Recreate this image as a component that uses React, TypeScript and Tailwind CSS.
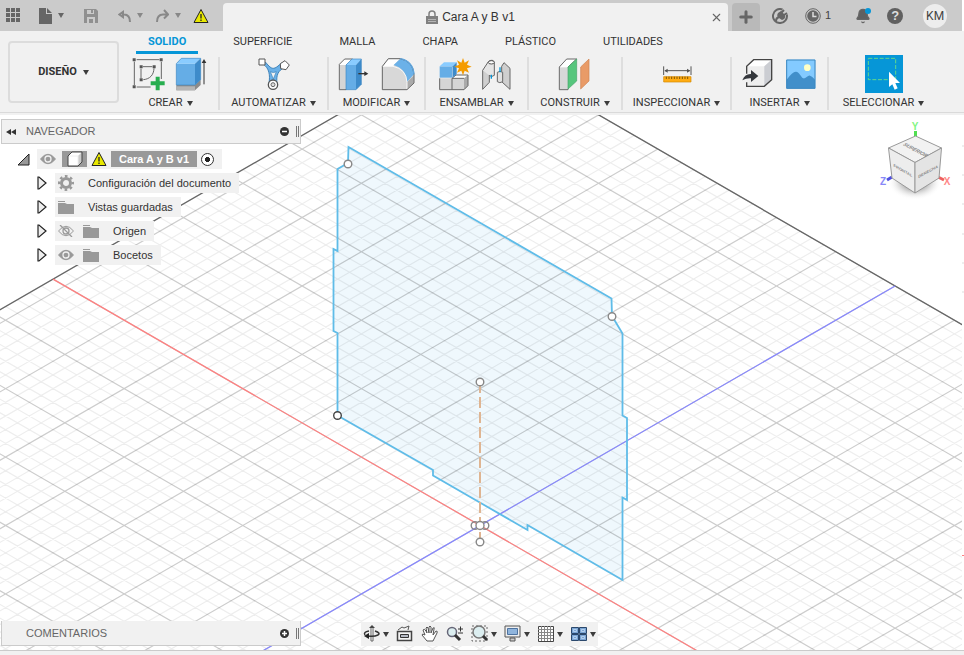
import React, { useState } from 'react';
import { X, Plus, Bell } from 'lucide-react';

const TABS = ['SOLIDO', 'SUPERFICIE', 'MALLA', 'CHAPA', 'PLÁSTICO', 'UTILIDADES'];

const Caret = ({ className = 'text-[#3c3c3c]' }: { className?: string }) => (
  <svg width="6" height="5" viewBox="0 0 6 5" className={`shrink-0 ${className}`} fill="currentColor">
    <path d="M0 0h6L3 5z" />
  </svg>
);

const Warning = () => (
  <svg width="16" height="16" viewBox="0 0 16 16">
    <path d="M8 1.5 15 14.5H1z" fill="#e8e800" stroke="#222" strokeLinejoin="round" />
    <path d="M8 6v4.500M8 11.500v1.500" stroke="#222" strokeWidth="1.300" />
  </svg>
);

/* ---------- ribbon icons, drawn on a 102 unit board ---------- */

const Board = ({ children }: { children: React.ReactNode }) => (
  <svg width="34" height="34" viewBox="0 0 102 102" fill="none">{children}</svg>
);

const SketchIcon = () => (
  <Board>
    <g stroke="#666" strokeWidth="3">
      <path d="M14 8h68M7 14v70M88 14v52M14 90h42M33 29h28M27 35v28M66 34c-1 20-12 32-32 34" />
    </g>
    <g fill="#555">
      <path d="M2 4h9v9H2zM83 4h9v9h-9zM2 85h9v9H2zM23 25h9v9h-9zM62 25h9v9h-9zM23 64h9v9h-9z" />
    </g>
    <path d="M71 59h12v14h15v12H83v15H71V85H56V73h15z" fill="#27ae4f" />
  </Board>
);

const ExtrudeIcon = () => (
  <Board>
    <path d="M4 84h56l17-16v16l-17 16H4z" fill="#8b8b8b" />
    <path d="M4 88h56v12H4z" fill="#b5b5b5" />
    <path d="M4 20h56v64H4z" fill="#65ade6" />
    <path d="M4 20 19 4h58L60 20z" fill="#8accff" />
    <path d="M60 20 77 4v64L60 84z" fill="#3e8bca" />
    <path d="M4 84V20L19 4h58v64L60 84z" stroke="#3c88c4" strokeWidth="2" />
    <path d="M87 82V14" stroke="#333" strokeWidth="3" />
    <path d="m80 18 7-12 7 12z" fill="#333" />
  </Board>
);

const AutomateIcon = () => (
  <Board>
    <path d="M20 22c16 12 20 32 16 56h24c-3-22 3-38 22-46l-8-14C62 28 56 34 49 34S36 28 26 16z" fill="#6bb1e8" stroke="#3e83ba" strokeWidth="3" />
    <path d="M40 44q9 5 18 0l-9 22z" fill="#f2f2f2" stroke="#3e83ba" strokeWidth="2" />
    <path d="M6 6h18v18H6zM84 11l13 13-10 14-16-3-1-15z" fill="#fff" stroke="#555" strokeWidth="3" />
    <circle cx="48" cy="83" r="14" fill="#fff" stroke="#555" strokeWidth="4" />
    <circle cx="48" cy="83" r="6" fill="#ddd" stroke="#666" strokeWidth="3" />
  </Board>
);

const PressPullIcon = () => (
  <Board>
    <path d="M4 22 20 6h24L24 26v72H4z" fill="#fff" stroke="#666" strokeWidth="3" />
    <path d="M6 24h18v72H6z" fill="#d5d5d5" />
    <path d="M24 24h30v74H24z" fill="#65ade6" />
    <path d="M24 24 42 6h28L54 24z" fill="#8accff" />
    <path d="M54 24 70 6v76L54 98z" fill="#3e8bca" />
    <path d="M24 98V24L42 6h28v76L54 98z" stroke="#3c88c4" strokeWidth="2" />
    <path d="M61 50h20" stroke="#333" strokeWidth="4" />
    <path d="m79 43 12 7-12 7z" fill="#333" />
  </Board>
);

const FilletIcon = () => (
  <Board>
    <path d="M4 28 22 5h36q38 8 41 47v26L78 98H4z" fill="#d8d8d8" />
    <path d="M6 28 23 7h32L36 28z" fill="#fff" />
    <path d="M78 76 98 56v22L78 97z" fill="#aaa" />
    <path d="M38 24 58 5q38 8 41 47L78 74Q76 36 38 24" fill="#6bb1e8" />
    <path d="M4 28h32q40 8 42 48v22" stroke="#f8f8f8" strokeWidth="3" />
    <path d="M4 28 22 5h36q38 8 41 47v26L78 98H4z" stroke="#666" strokeWidth="3" />
    <path d="M58 5q38 8 41 47" stroke="#5ea5de" strokeWidth="4" />
  </Board>
);

const NewComponentIcon = () => (
  <Board>
    <path d="M5 64h74V98H5z" fill="#d5d5d5" />
    <path d="m42 64 12-10h36L78 64z" fill="#fff" />
    <path d="m78 64 12-10v32L78 98z" fill="#aaa" />
    <path d="M5 64v34h73l12-12V54H54L42 64v34M42 64h36" stroke="#666" strokeWidth="3" />
    <path d="M5 28h38v34H5z" fill="#65ade6" />
    <path d="m5 28 13-12h38L44 28z" fill="#8accff" />
    <path d="m44 28 12-12v35L44 62z" fill="#3e8bca" />
    <path d="m75 3 5 14 13-7-6 13 14 6-14 5 6 13-13-6-5 14-5-14-13 6 6-13-14-5 14-6-6-13 13 7z" fill="#f59c00" />
  </Board>
);

const JointIcon = () => (
  <Board>
    <path d="M5 40 25 27V76L5 97z" fill="#cfcfcf" stroke="#666" strokeWidth="3" />
    <path d="M5 40 22 14q14-10 18 3v38q-8 7-16 0" fill="#e5e5e5" stroke="#666" strokeWidth="3" />
    <ellipse cx="31" cy="16" rx="9" ry="5" fill="#fff" stroke="#555" strokeWidth="3" />
    <path d="M62 28 69 17 87 34V97L62 74z" fill="#cfcfcf" stroke="#666" strokeWidth="3" />
    <path d="M49 46q8-6 16 0v28q-9 6-16 0z" fill="#e2e2e2" stroke="#666" strokeWidth="3" />
    <path d="M31 53v12M57 31v15" stroke="#0696d7" strokeWidth="4" />
  </Board>
);

const PlaneIcon = () => (
  <Board>
    <path d="M4 30 26 6h30L30 30v68H4z" fill="#fff" stroke="#666" strokeWidth="3" />
    <path d="M6 31h24v65H6z" fill="#d8d8d8" />
    <path d="M30 30 56 6v66L30 96z" fill="#56c67d" stroke="#47a569" strokeWidth="2" />
    <path d="M68 30 93 6v66L68 96z" fill="#e99b67" stroke="#cf8250" strokeWidth="2" />
  </Board>
);

const MeasureIcon = () => (
  <Board>
    <path d="M11 28v26M93 28v26M15 41h74" stroke="#555" strokeWidth="3" />
    <path d="m13 41 10-6v12zM91 41l-10-6v12z" fill="#555" />
    <path d="M11 59h82v16H11z" fill="#ffac13" stroke="#d28800" strokeWidth="2" />
    <path d="M19 59v7m8-7v7m8-7v7m8-7v7m8-7v7m8-7v7m8-7v7m8-7v7m8-7v7" stroke="#805600" strokeWidth="3" />
  </Board>
);

const InsertIcon = () => (
  <Board>
    <path d="M17 28 38 8h54v60L70 88H17z" fill="#eee" />
    <path d="M17 28 38 8h54L70 28z" fill="#fff" />
    <path d="M70 28 92 8v60L70 88z" fill="#cbcdd2" />
    <path d="M17 50V28L38 8h54v60L70 88H17V76" stroke="#444" strokeWidth="4" />
    <path d="M4 70q8-20 26-19V39l22 18-22 18V64q-14-1-26 6" fill="#34373c" />
  </Board>
);

const ImageIcon = () => (
  <Board>
    <path d="M7 8h87v87H7z" fill="#83caff" />
    <path d="M8 68q18-25 28-24c10 1 16 18 22 20s14-10 20-8 12 8 15 12v26H8z" fill="#418fca" />
    <circle cx="70" cy="32" r="10" fill="#ffffc5" />
    <path d="M8 9h85v85H8z" stroke="#3c87be" strokeWidth="3" />
  </Board>
);

const SelectIcon = () => (
  <svg width="38" height="38" viewBox="0 0 114 114" className="bg-[#0696d7]">
    <path d="M10 10h82v64H10z" fill="none" stroke="#62d88b" strokeWidth="3" strokeDasharray="12 5" />
    <path d="M72 50v46l10-8 7 16 9-4-7-16h14z" fill="#fff" />
  </svg>
);

const GROUPS = [
  { label: 'CREAR', width: 'w-[97px]', icons: [SketchIcon, ExtrudeIcon] },
  { label: 'AUTOMATIZAR', width: 'w-[109px]', icons: [AutomateIcon] },
  { label: 'MODIFICAR', width: 'w-[97px]', icons: [PressPullIcon, FilletIcon] },
  { label: 'ENSAMBLAR', width: 'w-[103px]', icons: [NewComponentIcon, JointIcon] },
  { label: 'CONSTRUIR', width: 'w-[94px]', icons: [PlaneIcon] },
  { label: 'INSPECCIONAR', width: 'w-[109px]', icons: [MeasureIcon] },
  { label: 'INSERTAR', width: 'w-[97px]', icons: [InsertIcon, ImageIcon] },
  { label: 'SELECCIONAR', width: 'w-[109px]', icons: [SelectIcon] },
];

/* ---------- title bar ---------- */

const TitleBar = () => (
  <header className="flex h-[31px] items-end border-r-2 border-white bg-[#cbcbcb] text-[#666]">
    <div className="flex h-full w-[223px] shrink-0 items-center pl-[6px]">
      <button aria-label="Panel de datos">
        <svg width="15" height="15" viewBox="0 0 15 15" fill="#666">
          <path d="M0 0h4v4H0zM5 0h4v4H5zM10 0h4v4h-4zM0 5h4v4H0zM5 5h4v4H5zM10 5h4v4h-4zM0 10h4v4H0zM5 10h4v4H5zM10 10h4v4h-4z" />
        </svg>
      </button>
      <button aria-label="Archivo" className="ml-[18px] flex items-center gap-[6px]">
        <svg width="13" height="16" viewBox="0 0 13 16" fill="#666"><path d="M0 0h7v6h6v10H0zM8 0l5 5H8z" /></svg>
        <Caret className="text-[#666]" />
      </button>
      <button aria-label="Guardar" className="ml-5">
        <svg width="14" height="14" viewBox="0 0 14 14">
          <path d="M0 0h12l2 2v12H0z" fill="#909090" />
          <path d="M3 1h7v4H3zM3 8h8v6H3z" fill="#cbcbcb" />
          <path d="M7 1h2v3H7zM5 10h4v4H5z" fill="#909090" />
        </svg>
      </button>
      <button aria-label="Deshacer" className="ml-5 flex items-center gap-[6px]">
        <svg width="13" height="14" viewBox="0 0 13 14" fill="none" stroke="#888" strokeWidth="2"><path d="M5 3v5L1.500 5.500zM4 5.500h2q6 0 6 7.500" /></svg>
        <Caret className="text-[#888]" />
      </button>
      <button aria-label="Rehacer" className="ml-[13px] flex items-center gap-[6px]">
        <svg width="13" height="14" viewBox="0 0 13 14" fill="none" stroke="#888" strokeWidth="2"><path d="m8 1 4 4.500-4 4M11 5.500H7Q1 5.500 1 13" /></svg>
        <Caret className="text-[#888]" />
      </button>
      <button aria-label="Advertencia" className="ml-3"><Warning /></button>
    </div>

    <div className="flex h-[28px] flex-1 items-center rounded-t bg-[#f1f1f1] pr-[5px]">
      <div className="flex flex-1 items-center justify-center gap-1 pl-2 text-xs text-[#333]">
        <svg width="12" height="14" viewBox="0 0 12 14" fill="none">
          <path d="M3 6V4q0-3 3-3t3 3v2" stroke="#808080" strokeWidth="1.500" />
          <path d="M0 6h12v8H0z" fill="#808080" />
          <path d="M2 9.500h8M2 11.500h8" stroke="#b5b5b5" />
        </svg>
        <span>Cara A y B v1</span>
      </div>
      <button aria-label="Cerrar"><X size={13} /></button>
    </div>
    <button aria-label="Nueva pestaña" className="ml-1 flex h-[28px] w-[28px] items-center justify-center rounded-t bg-[#b9b9b9]">
      <Plus size={18} strokeWidth={4} />
    </button>

    <div className="flex h-full w-[202px] shrink-0 items-center pl-3">
      <button aria-label="Extensiones">
        <svg width="16" height="16" viewBox="0 0 16 16" fill="none">
          <path d="M10.500 1.500A7 7 0 1 0 14.800 6.500" stroke="#666" strokeWidth="2" />
          <path d="M6 5 9 3l4 4q1 4-3 5L7 10Q4 8 6 5" fill="#666" />
          <path d="M7 9q-3 1-3 4M9 5l3-3M12 7l3-2" stroke="#666" strokeWidth="2" />
        </svg>
      </button>
      <button aria-label="Trabajos" className="ml-[17px] flex items-center gap-1 text-[11px] text-[#444]">
        <svg width="16" height="16" viewBox="0 0 16 16" fill="none">
          <circle cx="8" cy="8" r="7.300" stroke="#666" />
          <circle cx="8" cy="8" r="5.800" fill="#666" />
          <path d="M8 4v4.500h3.500" stroke="#ddd" strokeWidth="1.500" />
        </svg>
        1
      </button>
      <button aria-label="Notificaciones" className="relative ml-6">
        <Bell size={16} fill="#606060" />
        <span className="absolute top-0 right-0 h-[6px] w-[6px] rounded-full bg-[#0696d7]" />
      </button>
      <button aria-label="Ayuda" className="ml-4 flex h-4 w-4 items-center justify-center rounded-full bg-[#606060] text-[13px] font-bold text-[#ddd]">?</button>
      <button className="ml-5 flex h-6 w-6 items-center justify-center rounded-full bg-[#ededed] font-[Roboto] text-xs text-[#444]">KM</button>
    </div>
  </header>
);

/* ---------- ribbon ---------- */

const Ribbon = () => {
  const [active, setActive] = useState('SOLIDO');

  return (
    <div className="flex h-[84px] border-b-2 border-[#f1f1f1] bg-[#f1f1f1] font-[Roboto,sans-serif] text-[11px] text-[#333]">
      <div className="flex flex-1 border-b border-[#dadada]">
        <button className="mt-[10px] ml-2 flex h-[62px] w-[111px] shrink-0 items-center justify-center gap-[6px] rounded border-2 border-[#dcdcdc] font-bold">
          DISEÑO <Caret />
        </button>
        <div className="ml-1">
          <nav className="flex h-[23px] gap-[23px] pl-[13px]">
            {TABS.map((tab) => (
              <button
                key={tab}
                onClick={() => setActive(tab)}
                className={`border-b-[3px] px-3 pt-[3px] ${tab === active ? 'border-[#0696d7] font-bold text-[#0696d7]' : 'border-transparent'}`}
              >
                {tab}
              </button>
            ))}
          </nav>
          <div className="flex h-[56px] items-stretch pt-[3px]">
            {GROUPS.map(({ label, width, icons }, i) => (
              <div
                key={label}
                className={`flex flex-col justify-between ${width} ${i < GROUPS.length - 1 ? 'border-r-2 border-[#dedede]' : ''}`}
              >
                <div className="flex h-[34px] items-center justify-center gap-[9px]">
                  {icons.map((Icon, n) => <button key={n} aria-label={label.toLowerCase()}><Icon /></button>)}
                </div>
                <button className="flex items-center justify-center gap-1 leading-[14px]">
                  {label} <Caret />
                </button>
              </div>
            ))}
          </div>
        </div>
      </div>
    </div>
  );
};

/* ---------- model space ---------- */

// a runs along the red axis, b along the blue one, in major grid cells
const project = (a: number, b: number) => [480 + (a + b) * 59.3, 525.5 + (a - b) * 34.22];

const segment = (a1: number, b1: number, a2: number, b2: number) => {
  const [x1, y1] = project(a1, b1);
  const [x2, y2] = project(a2, b2);
  return `M${x1} ${y1}L${x2} ${y2}`;
};

const gridPath = (major: boolean) => {
  let d = '';
  for (let i = -36; i <= 36; i++) {
    if ((i % 5 === 0) !== major) continue;
    d += segment(i / 5, -7.2, i / 5, 7);
    if (i <= 35) d += segment(-7.2, i / 5, 7.2, i / 5);
  }
  return d;
};

const PROFILE =
  'M348.500 147 611.500 298.500 612 316 622.500 333.500V415.500L627 418V500L622.500 497.500V580L527.500 525V530L433 475.500V470L337.500 415.500V333L333.500 331V249L337.500 251V169L348 163Z';

const Canvas = () => (
  <svg
    className="absolute inset-0 h-full w-full"
    viewBox="0 115 964 535"
    preserveAspectRatio="xMidYMid slice"
    fill="none"
  >
    <defs>
      <radialGradient id="shade">
        <stop offset="0.400" stopColor="#888" stopOpacity="0.700" />
        <stop offset="1" stopColor="#fff" stopOpacity="0" />
      </radialGradient>
    </defs>
    <path d={PROFILE} fill="#eff8fd" />
    <path d={gridPath(false)} stroke="#000" strokeOpacity="0.070" strokeWidth="1.200" />
    <path d={gridPath(true)} stroke="#000" strokeOpacity="0.200" strokeWidth="1.200" />
    <path d={segment(-7.2, -7, -7.2, 7) + segment(-7.2, 7, 7.2, 7)} stroke="#666" strokeWidth="1.300" />
    <path d={segment(-7.2, 0, 7.2, 0)} stroke="#ff7f7f" strokeWidth="1.200" />
    <path d={segment(0, -7.2, 0, 7)} stroke="#8686ff" strokeWidth="1.200" />
    <path d={PROFILE} stroke="#5fbce8" strokeWidth="1.800" />
    <path d="M480 386V542" stroke="#dfb592" strokeWidth="2" strokeDasharray="11 4" strokeDashoffset="4" />
    <g stroke="#888" strokeWidth="1.400" fill="#fff">
      <circle cx="348" cy="164" r="3.800" />
      <circle cx="612" cy="316.500" r="3.800" />
      <circle cx="337.500" cy="415.500" r="3.800" stroke="#444" />
      <circle cx="480" cy="382" r="3.800" />
      <circle cx="480" cy="542" r="3.800" />
      <circle cx="475" cy="525.500" r="3.800" fill="none" />
      <circle cx="485" cy="525.500" r="3.800" fill="none" />
      <circle cx="480" cy="525.500" r="4" />
    </g>
    <path d="M962 115h2v535h-2z" fill="#fff" />
    <path d="M962 146h2M962 175h2M962 204h2M962 234h2M962 263h2M962 292h2M962 409h2" stroke="#ddd" />
    <path d="M962 555.500h2" stroke="#ff7f7f" />

    {/* View cube */}
    <ellipse cx="915" cy="182" rx="27" ry="18" fill="url(#shade)" />
    <path d="M915.500 137v-6" stroke="#50df50" strokeWidth="3" />
    <path d="m892 177-5 3" stroke="#5050df" strokeWidth="3" />
    <path d="m938 177 6 3" stroke="#ef6060" strokeWidth="3" />
    <path d="m915.500 136 26 12-26.500 14.500-26.500-14.500z" fill="#f2f2f2" stroke="#999" />
    <path d="M888.500 148 915 162.500V193l-23-15z" fill="#ededed" stroke="#999" />
    <path d="M941.500 148 915 162.500V193l24-15z" fill="#e4e4e4" stroke="#999" />
    <g fill="#888" fontSize="5" fontWeight="bold" textAnchor="middle" className="font-['Liberation_Sans']">
      <text transform="translate(914 151) rotate(28) skewX(-30)">SUPERIOR</text>
      <text transform="translate(903 172) skewY(30)" fontSize="4">FRONTAL</text>
      <text transform="translate(928 173) skewY(-28)" fontSize="4">DERECHA</text>
    </g>
    <g fontSize="10" fontWeight="bold" textAnchor="middle" className="font-['Liberation_Sans']">
      <text x="915" y="130" fill="#83f583">Y</text>
      <text x="883" y="185" fill="#8888f8">Z</text>
      <text x="947" y="185" fill="#ff8888">X</text>
    </g>
  </svg>
);

/* ---------- browser tree ---------- */

const Eye = ({ off = false }: { off?: boolean }) => (
  <svg width="16" height="12" viewBox="0 0 16 12" fill="none" stroke="#999">
    <path d="M.500 6Q8-3.500 15.500 6 8 15.500.500 6z" fill={off ? 'none' : '#999'} />
    <circle cx="8" cy="6" r="3" stroke={off ? '#999' : '#f1f1f1'} strokeWidth="1.300" />
    {off && <path d="m2 0 12 12" strokeWidth="1.300" />}
  </svg>
);

const Folder = () => (
  <svg width="16" height="13" viewBox="0 0 16 13" fill="#999">
    <path d="M0 0h7v1H0zM0 2h7l2 1h7v10H0z" />
  </svg>
);

const Gear = () => (
  <svg width="16" height="16" viewBox="0 0 16 16" fill="none" stroke="#999">
    <circle cx="8" cy="8" r="4.500" strokeWidth="3" />
    <circle cx="8" cy="8" r="6.800" strokeWidth="2.400" strokeDasharray="2.670 2.670" strokeDashoffset="1.330" />
  </svg>
);

const NODES = [
  { label: 'Configuración del documento', icons: [<Gear key="g" />] },
  { label: 'Vistas guardadas', icons: [<Folder key="f" />] },
  { label: 'Origen', icons: [<Eye key="e" off />, <Folder key="f" />] },
  { label: 'Bocetos', icons: [<Eye key="e" />, <Folder key="f" />] },
];

const PanelGrip = ({ open }: { open: boolean }) => (
  <>
    <button aria-label={open ? 'Contraer' : 'Expandir'} className="ml-auto">
      <svg width="9" height="9" viewBox="0 0 9 9">
        <circle cx="4.500" cy="4.500" r="4.500" fill="#333" />
        <path d={open ? 'M2 4.500h5' : 'M2 4.500h5M4.500 2v5'} stroke="#fff" strokeWidth="1.500" />
      </svg>
    </button>
    <span className="mr-px ml-[7px] h-[11px] w-[3px] border-x border-[#777]" />
  </>
);

const Browser = () => (
  <aside className="absolute top-1 left-px w-[300px] text-[11px] text-[#333]">
    <div className="flex h-[25px] items-center border border-[#cbcbcb] bg-[#f1f1f1] pl-1 text-[#666]">
      <button aria-label="Ocultar navegador" className="mr-[10px]">
        <svg width="10" height="6" viewBox="0 0 10 6" fill="#333"><path d="M5 0v6L0 3zM10 0v6L5 3z" /></svg>
      </button>
      NAVEGADOR
      <PanelGrip open />
    </div>

    <ul className="pt-[5px]">
      <li className="mb-1 flex h-5 items-center pl-4">
        <button aria-label="Contraer Cara A y B v1">
          <svg width="13" height="13" viewBox="0 0 13 13"><path d="M12 1v11H1z" fill="#999" stroke="#222" /></svg>
        </button>
        <div className="ml-[7px] flex h-5 items-center bg-[#f1f1f1] pr-2 pl-[3px]">
          <Eye />
          <span className="ml-[6px] flex h-4 w-[25px] items-center justify-center bg-[#999]">
            <svg width="18" height="16" viewBox="0 0 18 16" fill="none">
              <path d="m2 5 4-4h10v10l-4 4H2z" fill="#fff" />
              <path d="m12 5 4-4v10l-4 4z" fill="#ccc" />
              <path d="M2 5h10v10" stroke="#eee" />
              <path d="m2 5 4-4h10v10l-4 4H2z" stroke="#444" />
            </svg>
          </span>
          <span className="mx-[4px]"><Warning /></span>
          <b className="h-4 bg-[#999] px-2 leading-4 text-white">Cara A y B v1</b>
          <input type="radio" name="active" defaultChecked aria-label="Activar componente" className="ml-1 h-[13px] w-[13px] appearance-none rounded-full border border-[#333] bg-radial from-[#222] from-30% to-white to-35%" />
        </div>
      </li>
      {NODES.map(({ label, icons }) => (
        <li key={label} className="mb-1 flex h-5 items-center pl-9">
          <button aria-label={`Expandir ${label}`}>
            <svg width="10" height="14" viewBox="0 0 10 14"><path d="M1 1v12h1l7-6-7-6z" fill="#eee" stroke="#222" strokeWidth="1.200" /></svg>
          </button>
          <div className="ml-2 flex h-5 items-center gap-[9px] bg-[#f1f1f1] pr-2 pl-[3px]">
            {icons}
            <span className="ml-[5px]">{label}</span>
          </div>
        </li>
      ))}
    </ul>
  </aside>
);

/* ---------- navigation bar ---------- */

const NAV_TOOLS = [
  {
    name: 'Orbitar', menu: true,
    art: <><path d="M8 2v14h2V2" fill="#fff" stroke="#666" /><path d="M9 0 6 3h6z" fill="#444" /><path d="M6 6Q0 7 2 10M12 6q6 2 3 4-4 2-10 1" stroke="#333" strokeWidth="1.500" /><path d="m1 11 5-3v6z" fill="#222" /></>,
  },
  {
    name: 'Mirar a', menu: false,
    art: <><path d="M1.500 6.500h14v9h-14z" fill="#f4f4f4" stroke="#444" strokeWidth="1.500" /><path d="M4.500 9.500h8v3h-8z" fill="#b5bac4" stroke="#333" /><path d="m2 5 4-3 2 1 5-2-1 4" stroke="#555" /></>,
  },
  {
    name: 'Encuadre', menu: false,
    art: <path d="M6 16 1 10q0-2 3 0L2 5q1-2 3 1l1 2-1-5q1-2 2 0l1 5V2q1-2 2 0v6l2-5q2-1 1 1l-1 6 3-4q2 0 1 2l-4 8z" fill="#fff" stroke="#555" />,
  },
  {
    name: 'Zoom', menu: false,
    art: <><circle cx="6" cy="7" r="4.500" fill="#dceef0" stroke="#667" strokeWidth="1.500" /><path d="m9 10 5 5" stroke="#333" strokeWidth="3" /><path d="M12 4h5M14.500 1.500v5M12 8h5" stroke="#333" /></>,
  },
  {
    name: 'Ajustar', menu: true,
    art: <><path d="M1 1h15v15H1z" stroke="#666" strokeDasharray="2 2" /><circle cx="8" cy="7" r="6" fill="#dceef0" stroke="#777" strokeWidth="1.500" /><path d="m12 11 4 4" stroke="#333" strokeWidth="3" /></>,
  },
  {
    name: 'Visualización', menu: true,
    art: <><path d="M1 1h15v11H1z" fill="#eee" stroke="#555" /><path d="M3.500 3.500h10v6h-10z" fill="#8fb4dc" stroke="#4e73a0" /><path d="M6 13h5v3H6z" fill="#ccc" stroke="#555" /></>,
  },
  {
    name: 'Rejilla', menu: true,
    art: <><path d="M1.500 1.500h15v15h-15z" fill="#fff" stroke="#444" /><path d="M4.500 1v15M7.500 1v15M10.500 1v15M13.500 1v15M1 4.500h15M1 7.500h15M1 10.500h15M1 13.500h15" stroke="#888" /></>,
  },
  {
    name: 'Ventanas', menu: true,
    art: <><path d="M1.500 2.500h7v6h-7zM9.500 2.500h7v6h-7zM1.500 9.500h7v6h-7zM9.500 9.500h7v6h-7z" fill="#7ba5d4" stroke="#2b486c" /><path d="M3.500 4.500h3v2h-3zM11.500 4.500h3v2h-3zM3.500 11.500h3v2h-3zM11.500 11.500h3v2h-3z" stroke="#b4d0ee" /></>,
  },
];

const NavBar = () => (
  <div className="absolute bottom-1 left-[361px] flex h-6 items-center gap-[7px] bg-[#f1f1f1] px-[2px]">
    {NAV_TOOLS.map(({ name, menu, art }) => (
      <button key={name} aria-label={name} className="flex items-center gap-[2px]">
        <svg width="18" height="18" viewBox="0 0 18 18" fill="none">{art}</svg>
        {menu && <Caret />}
      </button>
    ))}
  </div>
);

export default function App() {
  return (
    <div className="flex min-h-screen flex-col bg-white font-['Liberation_Sans',sans-serif]">
      <TitleBar />
      <Ribbon />
      <main className="relative flex-1 overflow-hidden border-b border-[#cbcbcb]">
        <Canvas />
        <Browser />
        <div className="absolute bottom-1 left-px flex h-[25px] w-[300px] items-center border border-t-0 border-[#cbcbcb] bg-[#f1f1f1] pl-6 text-[11px] text-[#666]">
          COMENTARIOS
          <PanelGrip open={false} />
        </div>
        <NavBar />
      </main>
      <footer className="h-1 bg-[#f1f1f1]" />
    </div>
  );
}
